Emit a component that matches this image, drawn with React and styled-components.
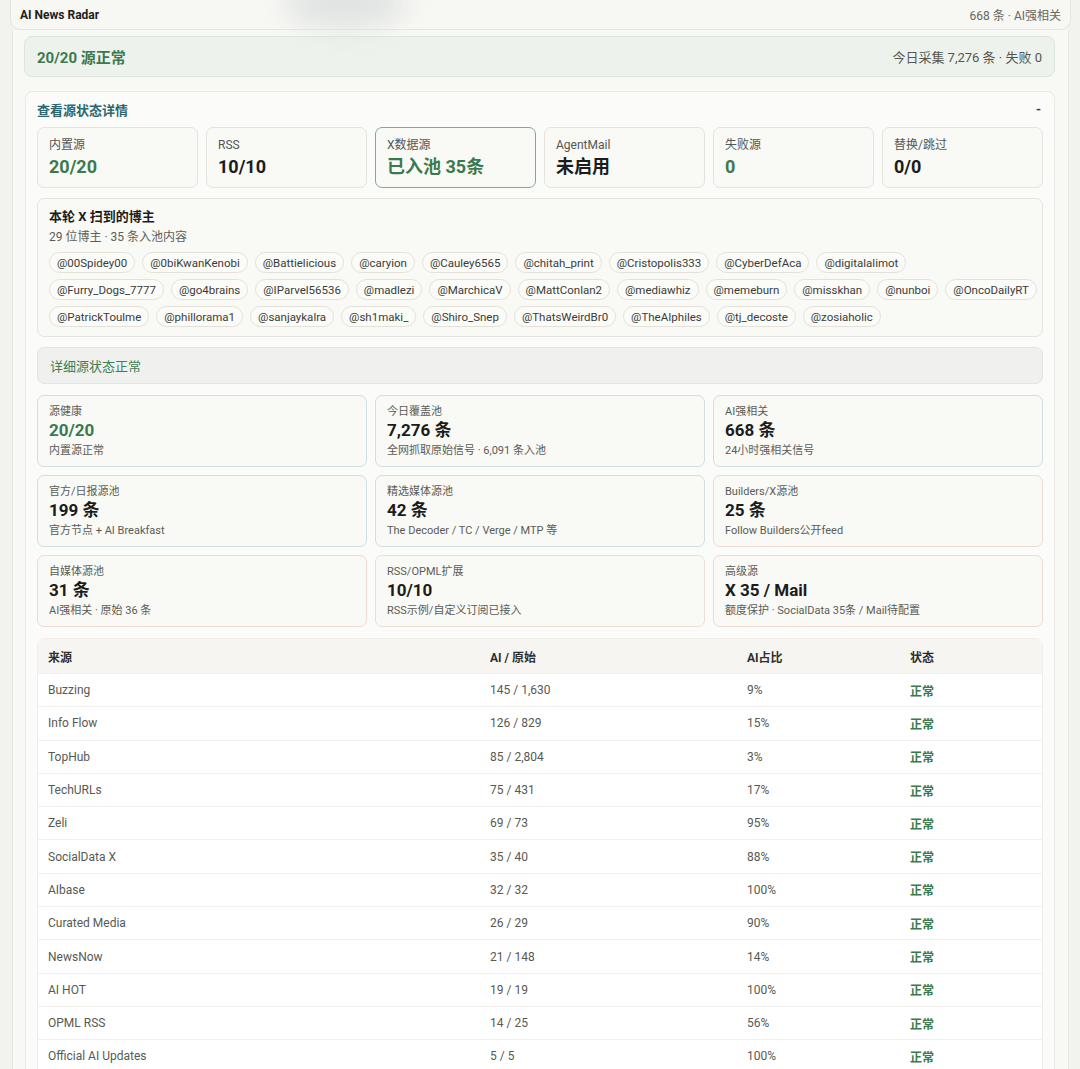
import React from "react";
import styled, { createGlobalStyle } from "styled-components";

const GlobalStyle = createGlobalStyle`
  html, body {
    margin: 0;
    padding: 0;
    background: #f2f3ee;
    font-family: Roboto, "Noto Sans CJK SC", "Noto Sans", sans-serif;
    color: #1d1f1d;
    overflow: hidden;
  }
  * { box-sizing: border-box; }
`;

const Page = styled.div`
  position: relative;
  padding: 0 9px 0 10px;
  min-height: 1069px;
`;

const Blur = styled.div`
  position: absolute;
  left: 285px;
  top: -22px;
  width: 120px;
  height: 50px;
  border-radius: 50%;
  background: #d9dede;
  filter: blur(14px);
  opacity: 0.8;
  pointer-events: none;
`;

const Header = styled.header`
  height: 30px;
  display: flex;
  align-items: center;
  justify-content: space-between;
  padding: 0 9px 0 9px;
  background: #f7f7f3;
  border: 1px solid #e6e6e0;
  border-top: none;
  border-radius: 0 0 10px 10px;
`;

const Brand = styled.div`
  font-size: 12px;
  font-weight: 700;
  color: #1e201e;
`;

const HeaderMeta = styled.div`
  font-size: 12px;
  color: #666660;
`;

const Panel = styled.main`
  margin: 0 2px;
  padding: 6px 13px 0 11px;
  background: #f8f8f5;
  border-left: 1px solid #e7e7e1;
  border-right: 1px solid #e7e7e1;
  min-height: 1040px;
`;

const Banner = styled.div`
  height: 41px;
  display: flex;
  align-items: center;
  justify-content: space-between;
  padding: 0 12px;
  background: #edf2ec;
  border: 1px solid #dde6dc;
  border-radius: 8px;
`;

const BannerTitle = styled.div`
  font-size: 15px;
  font-weight: 700;
  color: #3b7a4e;
`;

const BannerMeta = styled.div`
  font-size: 13px;
  color: #555650;
`;

const Details = styled.section`
  margin-top: 14px;
  margin-left: 1px;
  padding: 8px 11px 12px;
  background: #fbfbf9;
  border: 1px solid #ebeae4;
  border-radius: 8px;
`;

const DetailsHead = styled.div`
  display: flex;
  justify-content: space-between;
  align-items: center;
  height: 18px;
  margin-bottom: 9px;
`;

const DetailsTitle = styled.div`
  font-size: 13px;
  font-weight: 700;
  color: #2c6670;
`;

const Toggle = styled.div`
  font-size: 13px;
  font-weight: 700;
  color: #333;
  padding-right: 2px;
`;

const StatRow = styled.div`
  display: grid;
  grid-template-columns: repeat(6, 1fr);
  gap: 8px;
`;

const StatCard = styled.div`
  height: 61px;
  padding: 9px 11px 0;
  background: #f9f9f6;
  border: 1px solid ${(p) => (p.$highlight ? "#7fa7a6" : "#e5e3dc")};
  border-radius: 7px;
`;

const StatLabel = styled.div`
  font-size: 12px;
  line-height: 16px;
  color: #555650;
`;

const StatValue = styled.div`
  margin-top: 2px;
  font-size: 18px;
  line-height: 24px;
  font-weight: 700;
  color: ${(p) => (p.$green ? "#3b7a4e" : "#1b1c1b")};
`;

const Box = styled.div`
  margin-top: 10px;
  padding: 9px 11px 9px;
  background: #f9f9f6;
  border: 1px solid #e5e3dc;
  border-radius: 7px;
`;

const BoxTitle = styled.div`
  font-size: 13px;
  line-height: 18px;
  font-weight: 700;
  color: #1b1c1b;
`;

const BoxSub = styled.div`
  margin-top: 3px;
  font-size: 12px;
  line-height: 16px;
  color: #5d5e58;
`;

const Chips = styled.div`
  margin-top: 7px;
  display: flex;
  flex-direction: column;
  gap: 6px;
`;

const ChipLine = styled.div`
  display: flex;
  gap: 7px;
  white-space: nowrap;
`;

const Chip = styled.span`
  height: 21px;
  display: inline-flex;
  align-items: center;
  padding: 0 7px;
  font-size: 11.5px;
  color: #3a3b38;
  background: #fbfbf8;
  border: 1px solid #e3e1da;
  border-radius: 11px;
`;

const SubBanner = styled.div`
  margin-top: 10px;
  height: 37px;
  display: flex;
  align-items: center;
  padding: 0 12px;
  font-size: 13px;
  color: #3f7d52;
  background: #f0f1ee;
  border: 1px solid #e4e5e0;
  border-radius: 7px;
`;

const MetricGrid = styled.div`
  margin-top: 11px;
  display: grid;
  grid-template-columns: repeat(3, 1fr);
  gap: 8px;
`;

const borderTone = {
  blue: "#d2dedf",
  rose: "#eedad2",
  sand: "#e9dfd2",
};

const MetricCard = styled.div`
  height: 72px;
  padding: 8px 11px 0;
  background: #f9f9f6;
  border: 1px solid ${(p) => borderTone[p.$tone]};
  border-radius: 7px;
`;

const MetricLabel = styled.div`
  font-size: 11px;
  line-height: 15px;
  color: #5b5c57;
`;

const MetricValue = styled.div`
  font-size: 17px;
  line-height: 23px;
  font-weight: 700;
  color: ${(p) => (p.$green ? "#3b7a4e" : "#1b1c1b")};
`;

const MetricSub = styled.div`
  margin-top: 1px;
  font-size: 11px;
  line-height: 15px;
  color: #5b5c57;
`;

const Table = styled.div`
  margin-top: 11px;
  background: #ffffff;
  border: 1px solid #efeee9;
  border-radius: 8px 8px 0 0;
  overflow: hidden;
`;

const Row = styled.div`
  display: grid;
  grid-template-columns: 442px 257px 163px 1fr;
  height: ${(p) => (p.$head ? "34px" : "33.3px")};
  align-items: center;
  background: ${(p) => (p.$head ? "#f6f5f2" : "#ffffff")};
  border-top: ${(p) => (p.$head ? "none" : "1px solid #f1f0ec")};
  font-size: 12px;
  font-weight: ${(p) => (p.$head ? 700 : 400)};
  color: ${(p) => (p.$head ? "#2e2f2c" : "#585954")};
`;

const Cell = styled.div`
  padding-left: 10px;
`;

const Status = styled(Cell)`
  color: #3b7a4e;
  font-weight: 700;
`;

const stats = [
  { label: "内置源", value: "20/20", green: true },
  { label: "RSS", value: "10/10" },
  { label: "X数据源", value: "已入池 35条", green: true, highlight: true },
  { label: "AgentMail", value: "未启用" },
  { label: "失败源", value: "0", green: true },
  { label: "替换/跳过", value: "0/0" },
];

const bloggerLines = [
  [
    "@00Spidey00", "@0biKwanKenobi", "@Battielicious", "@caryion", "@Cauley6565",
    "@chitah_print", "@Cristopolis333", "@CyberDefAca", "@digitalalimot",
  ],
  [
    "@Furry_Dogs_7777", "@go4brains", "@IParvel56536", "@madlezi", "@MarchicaV",
    "@MattConlan2", "@mediawhiz", "@memeburn", "@misskhan", "@nunboi", "@OncoDailyRT",
  ],
  [
    "@PatrickToulme", "@phillorama1", "@sanjaykalra", "@sh1maki_", "@Shiro_Snep",
    "@ThatsWeirdBr0", "@TheAIphiles", "@tj_decoste", "@zosiaholic",
  ],
];

const metrics = [
  { label: "源健康", value: "20/20", sub: "内置源正常", green: true, tone: "blue" },
  { label: "今日覆盖池", value: "7,276 条", sub: "全网抓取原始信号 · 6,091 条入池", tone: "blue" },
  { label: "AI强相关", value: "668 条", sub: "24小时强相关信号", tone: "blue" },
  { label: "官方/日报源池", value: "199 条", sub: "官方节点 + AI Breakfast", tone: "blue" },
  { label: "精选媒体源池", value: "42 条", sub: "The Decoder / TC / Verge / MTP 等", tone: "blue" },
  { label: "Builders/X源池", value: "25 条", sub: "Follow Builders公开feed", tone: "rose" },
  { label: "自媒体源池", value: "31 条", sub: "AI强相关 · 原始 36 条", tone: "rose" },
  { label: "RSS/OPML扩展", value: "10/10", sub: "RSS示例/自定义订阅已接入", tone: "sand" },
  { label: "高级源", value: "X 35 / Mail", sub: "额度保护 · SocialData 35条 / Mail待配置", tone: "rose" },
];

const sources = [
  ["Buzzing", "145 / 1,630", "9%"],
  ["Info Flow", "126 / 829", "15%"],
  ["TopHub", "85 / 2,804", "3%"],
  ["TechURLs", "75 / 431", "17%"],
  ["Zeli", "69 / 73", "95%"],
  ["SocialData X", "35 / 40", "88%"],
  ["AIbase", "32 / 32", "100%"],
  ["Curated Media", "26 / 29", "90%"],
  ["NewsNow", "21 / 148", "14%"],
  ["AI HOT", "19 / 19", "100%"],
  ["OPML RSS", "14 / 25", "56%"],
  ["Official AI Updates", "5 / 5", "100%"],
];

export default function App() {
  return (
    <>
      <GlobalStyle />
      <Page>
        <Header>
          <Brand>AI News Radar</Brand>
          <HeaderMeta>668 条 · AI强相关</HeaderMeta>
        </Header>
        <Blur />
        <Panel>
          <Banner>
            <BannerTitle>20/20 源正常</BannerTitle>
            <BannerMeta>今日采集 7,276 条 · 失败 0</BannerMeta>
          </Banner>

          <Details>
            <DetailsHead>
              <DetailsTitle>查看源状态详情</DetailsTitle>
              <Toggle>-</Toggle>
            </DetailsHead>

            <StatRow>
              {stats.map((s) => (
                <StatCard key={s.label} $highlight={s.highlight}>
                  <StatLabel>{s.label}</StatLabel>
                  <StatValue $green={s.green}>{s.value}</StatValue>
                </StatCard>
              ))}
            </StatRow>

            <Box>
              <BoxTitle>本轮 X 扫到的博主</BoxTitle>
              <BoxSub>29 位博主 · 35 条入池内容</BoxSub>
              <Chips>
                {bloggerLines.map((line, i) => (
                  <ChipLine key={i}>
                    {line.map((b) => (
                      <Chip key={b}>{b}</Chip>
                    ))}
                  </ChipLine>
                ))}
              </Chips>
            </Box>

            <SubBanner>详细源状态正常</SubBanner>

            <MetricGrid>
              {metrics.map((m) => (
                <MetricCard key={m.label} $tone={m.tone}>
                  <MetricLabel>{m.label}</MetricLabel>
                  <MetricValue $green={m.green}>{m.value}</MetricValue>
                  <MetricSub>{m.sub}</MetricSub>
                </MetricCard>
              ))}
            </MetricGrid>

            <Table>
              <Row $head>
                <Cell>来源</Cell>
                <Cell>AI / 原始</Cell>
                <Cell>AI占比</Cell>
                <Cell>状态</Cell>
              </Row>
              {sources.map(([name, count, ratio]) => (
                <Row key={name}>
                  <Cell>{name}</Cell>
                  <Cell>{count}</Cell>
                  <Cell>{ratio}</Cell>
                  <Status>正常</Status>
                </Row>
              ))}
            </Table>
          </Details>
        </Panel>
      </Page>
    </>
  );
}
